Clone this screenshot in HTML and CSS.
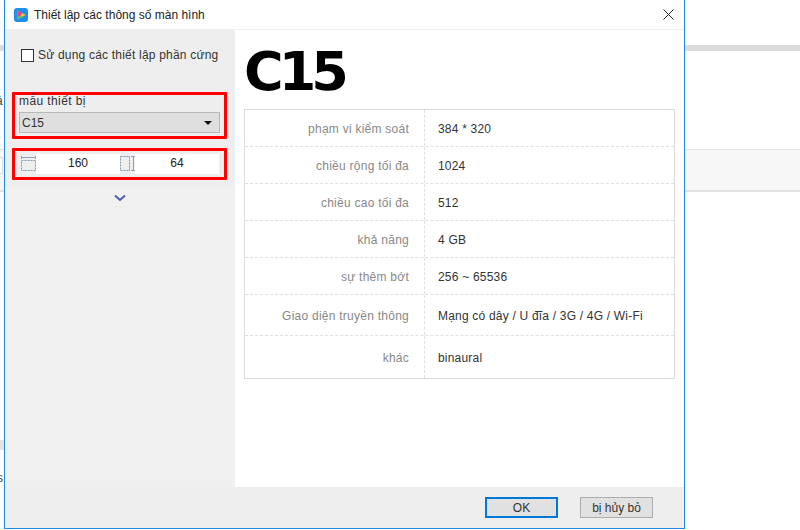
FILE: index.html
```html
<!DOCTYPE html>
<html lang="vi">
<head>
    <meta charset="UTF-8">
    <meta name="viewport" content="width=device-width, initial-scale=1.0">
    <title>Thiết lập các thông số màn hình</title>
    <link rel="stylesheet" href="styles.css">
</head>
<body>
<div class="backdrop">
    <div class="back-band"></div>
    <div class="back-row"><div class="back-input"></div></div>
    <span class="back-glyph glyph-a">ả</span>
    <span class="back-glyph glyph-s">s</span>
    <div class="back-chip"></div>
</div>
<div class="dialog">
    <div class="titlebar">
        <svg class="app-icon" width="14" height="14" viewBox="0 0 14 14">
            <rect width="14" height="14" rx="3" fill="#1f8fe8"/>
            <path d="M3.5 2.5 L11.5 7 L3.5 11.5 Z" fill="#f2d030"/>
            <path d="M3.5 2.5 L8 5 L6.5 8.5 L3.5 8.5 Z" fill="#e8457a"/>
            <path d="M3.5 8.5 L8.5 8 L3.5 11.5 Z" fill="#3ec06a"/>
        </svg>
        <span class="title">Thiết lập các thông số màn hình</span>
        <svg class="close" width="11" height="11" viewBox="0 0 11 11">
            <path d="M0.5 0.5 L10.5 10.5 M10.5 0.5 L0.5 10.5" stroke="#222" stroke-width="1" fill="none"/>
        </svg>
    </div>
    <div class="content">
        <div class="sidebar">
            <div class="side-top">
                <label class="check-row">
                    <span class="check"></span>
                    Sử dụng các thiết lập phần cứng
                </label>
                <div class="red-box model-box">
                    <div class="model-label">mẫu thiết bị</div>
                    <div class="select">
                        <span>C15</span>
                        <span class="arrow"></span>
                    </div>
                </div>
                <div class="red-box size-box">
                    <svg class="size-icon" width="15" height="15" viewBox="0 0 15 15">
                        <path d="M0.5 0 V3 M14.5 0 V3 M0.5 1.5 H14.5" stroke="#8aa3bb" fill="none"/>
                        <rect x="0.5" y="4.5" width="14" height="10" stroke="#7f9ab5" stroke-dasharray="2 1" fill="none"/>
                    </svg>
                    <div class="size-value">160</div>
                    <svg class="size-icon" width="15" height="15" viewBox="0 0 15 15">
                        <path d="M13.5 0.5 V14.5 M11 0.5 H15 M11 14.5 H15" stroke="#8aa3bb" fill="none"/>
                        <rect x="0.5" y="0.5" width="9" height="14" stroke="#7f9ab5" stroke-dasharray="2 1" fill="none"/>
                    </svg>
                    <div class="size-value">64</div>
                </div>
            </div>
            <div class="expand">
                <svg width="12" height="8" viewBox="0 0 12 8">
                    <path d="M1 1.5 L6 6 L11 1.5" stroke="#4a5cae" stroke-width="2" fill="none"/>
                </svg>
            </div>
        </div>
        <div class="main">
            <h1 class="model-name">C15</h1>
            <div class="specs">
                <div class="spec-row h37"><div class="spec-key">phạm vi kiểm soát</div><div class="spec-val">384 * 320</div></div>
                <div class="spec-row h37"><div class="spec-key">chiều rộng tối đa</div><div class="spec-val">1024</div></div>
                <div class="spec-row h37"><div class="spec-key">chiều cao tối đa</div><div class="spec-val">512</div></div>
                <div class="spec-row h37"><div class="spec-key">khả năng</div><div class="spec-val">4 GB</div></div>
                <div class="spec-row h37"><div class="spec-key">sự thêm bớt</div><div class="spec-val">256 ~ 65536</div></div>
                <div class="spec-row h41"><div class="spec-key">Giao diện truyền thông</div><div class="spec-val">Mạng có dây / U đĩa / 3G / 4G / Wi-Fi</div></div>
                <div class="spec-row h42"><div class="spec-key">khác</div><div class="spec-val">binaural</div></div>
            </div>
        </div>
    </div>
    <div class="footer">
        <button class="btn btn-ok">OK</button>
        <button class="btn">bị hủy bỏ</button>
    </div>
</div>
</body>
</html>
```

FILE: styles.css
```css
html, body {
    margin: 0;
    height: 530px;
    overflow: hidden;
    background: #fff;
    font-family: "Liberation Sans", sans-serif;
    font-size: 12px;
    color: #333;
}

.backdrop {
    height: 530px;
    padding-top: 45px;
    box-sizing: border-box;
}

.back-band {
    height: 6px;
    background: #dcdcdc;
}

.back-row {
    margin-top: 98px;
    padding-top: 7px;
    height: 33px;
    background: #f7f7f7;
    border-top: 1px solid #e2e2e2;
    border-bottom: 2px solid #e2e2e2;
}

.back-input {
    width: 2px;
    height: 15px;
    background: #fff;
    border: 1px solid #dcdcdc;
    border-left: 0;
}

/* scraps of the page behind, only the window's left edge shows them */
.back-glyph {
    position: absolute;
    left: -4px;
    font-size: 12px;
    color: #444;
}

.glyph-a {
    top: 94px;
}

.glyph-s {
    top: 471px;
    left: -3px;
}

.back-chip {
    position: absolute;
    left: 0;
    top: 440px;
    width: 4px;
    height: 10px;
    background: #e4e4e4;
}

/* window sits on top of the page behind it */
.dialog {
    position: absolute;
    left: 4px;
    top: 0;
    width: 679px;
    height: 528px;
    display: flex;
    flex-direction: column;
    background: #fff;
    border: 1px solid #1e8ae6;
    border-top: 0;
}

.titlebar {
    height: 29px;
    flex: none;
    display: flex;
    align-items: center;
    padding: 0 10px 0 9px;
    border-bottom: 1px solid #efefef;
}

.app-icon {
    margin-right: 6px;
}

.title {
    flex: 1;
    color: #222;
}

.content {
    flex: 1;
    display: flex;
    min-height: 0;
}

.sidebar {
    width: 230px;
    flex: none;
    display: flex;
    flex-direction: column;
    background: #f0f0f0;
}

.side-top {
    height: 157px;
    padding: 0 8px 0 7px;
    box-sizing: border-box;
    background: #eeeeee;
}

.check-row {
    display: flex;
    align-items: center;
    height: 20px;
    padding: 15px 0 0 9px;
    color: #333;
    letter-spacing: 0.2px;
}

.check {
    width: 11px;
    height: 11px;
    margin-right: 4px;
    background: #fff;
    border: 1px solid #333;
}

.red-box {
    border: 3px solid #f00;
    border-radius: 1px;
    box-sizing: border-box;
    width: 215px;
}

.model-box {
    height: 47px;
    margin-top: 27px;
    padding: 0 4px;
}

.model-label {
    height: 17px;
    line-height: 12px;
    letter-spacing: 0.4px;
}

.select {
    display: flex;
    align-items: center;
    justify-content: space-between;
    height: 19px;
    padding: 0 7px 0 2px;
    background: #dfdfdf;
    border: 1px solid #b9b9b9;
}

.arrow {
    width: 0;
    height: 0;
    border-left: 4px solid transparent;
    border-right: 4px solid transparent;
    border-top: 4px solid #111;
}

.size-box {
    height: 32px;
    margin-top: 9px;
    display: flex;
    align-items: center;
    padding: 0 5px 0 6px;
}

.size-icon {
    margin-bottom: 2px;
}

.size-value {
    flex: 1;
    height: 20px;
    line-height: 18px;
    text-align: center;
    background: #fff;
    color: #222;
}

.expand {
    display: flex;
    justify-content: center;
    padding-top: 7px;
}

.main {
    flex: 1;
    padding: 0 9px;
}

.model-name {
    margin: 16px 0 11px;
    height: 52px;
    font-family: "DejaVu Sans", sans-serif;
    font-size: 54px;
    font-weight: bold;
    line-height: 52px;
    letter-spacing: -5px;
    color: #000;
}

.specs {
    width: 431px;
    box-sizing: border-box;
    border: 1px solid #dcdcdc;
}

.spec-row {
    display: flex;
    align-items: center;
    border-bottom: 1px dashed #e0e0e0;
    box-sizing: border-box;
}

.spec-row:last-child {
    border-bottom: 0;
}

.h37 { height: 37px; }
.h41 { height: 41px; }
.h42 { height: 42px; }

.spec-key {
    width: 180px;
    height: 100%;
    padding: 2px 15px 0 0;
    box-sizing: border-box;
    display: flex;
    align-items: center;
    justify-content: flex-end;
    border-right: 1px dashed #e0e0e0;
    color: #888;
    letter-spacing: 0.25px;
}

.spec-val {
    padding: 2px 0 0 13px;
    color: #333;
    letter-spacing: 0.2px;
}

.footer {
    height: 41px;
    flex: none;
    display: flex;
    justify-content: flex-end;
    align-items: center;
    gap: 22px;
    padding: 0 31px 0 0;
    background: #eeeeee;
}

.btn {
    width: 73px;
    height: 21px;
    padding: 0;
    background: #e1e1e1;
    border: 1px solid #adadad;
    font-family: "Liberation Sans", sans-serif;
    font-size: 12px;
    color: #333;
}

.btn-ok {
    border: 2px solid #0078d7;
}
```
